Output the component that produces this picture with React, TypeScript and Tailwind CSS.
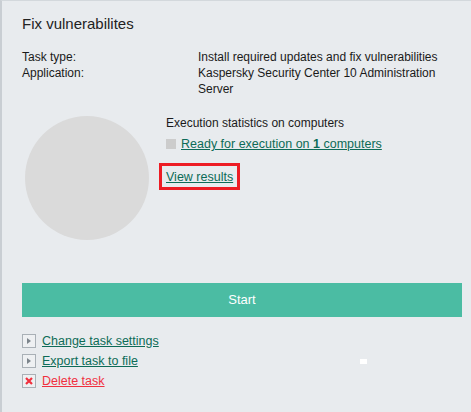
import { useState } from "react"

function ArrowBox() {
  return (
    <span className="w-[14px] h-[14px] border border-[#a9b0b6] bg-[#eef0f2] flex items-center justify-center shrink-0">
      <svg width="6" height="6" viewBox="0 0 6 6">
        <path d="M1 0 L5 3 L1 6 Z" fill="#7d858c" />
      </svg>
    </span>
  )
}

function CrossBox() {
  return (
    <span className="w-[14px] h-[14px] border border-[#a9b0b6] bg-[#eef0f2] flex items-center justify-center shrink-0">
      <svg width="8" height="8" viewBox="0 0 8 8">
        <path d="M1 1 L7 7 M7 1 L1 7" stroke="#f0303e" strokeWidth="2.2" />
      </svg>
    </span>
  )
}

export default function App() {
  const [ready] = useState(1)
  return (
    <div
      className="relative w-[471px] h-[412px] bg-[#e8ebee] border-l-2 border-t border-l-[#c9ced3] border-t-[#d3d8dc] text-[12px] text-[#1a1a1a] overflow-hidden"
      style={{ fontFamily: "Tahoma, 'Liberation Sans', Arial, sans-serif" }}
    >
      <div className="pl-[20px] pr-[9px] pt-[13px]">
        <h1 className="text-[15px] leading-[20px] text-[#222]">Fix vulnerabilites</h1>

        <div className="mt-[15px] grid grid-cols-[176px_1fr] leading-[16px]">
          <div>Task type:</div>
          <div>Install required updates and fix vulnerabilities</div>
          <div>Application:</div>
          <div className="pr-[20px]">Kaspersky Security Center 10 Administration Server</div>
        </div>

        <div className="mt-[18px] flex">
          <div className="w-[124px] h-[124px] rounded-full bg-[#dadada] mt-[1px] ml-[3px] shrink-0" />
          <div className="ml-[17px] flex flex-col">
            <div className="leading-[16px]">Execution statistics on computers</div>
            <div className="mt-[5px] flex items-center gap-[5px]">
              <span className="w-[10px] h-[10px] bg-[#cccccc]" />
              <a className="text-[#0d6b57] underline leading-[16px] text-[12.5px]">
                Ready for execution on <b>{ready}</b> computers
              </a>
            </div>
            <div className="mt-[11px] -ml-[7px] w-fit border-[3px] border-[#ed1c24] px-[4px] py-[2.5px]">
              <a className="text-[#0d6b57] underline leading-[16px] block text-[12.5px]">View results</a>
            </div>
          </div>
        </div>

        <button className="mt-[43px] w-[440px] h-[34px] bg-[#4bbca3] text-white text-[13px]">Start</button>

        <div className="mt-[16px] flex flex-col gap-[4px] text-[12.5px]">
          <div className="flex items-center gap-[6px] h-[16px]">
            <ArrowBox />
            <a className="text-[#0d6b57] underline">Change task settings</a>
          </div>
          <div className="flex items-center gap-[6px] h-[16px]">
            <ArrowBox />
            <a className="text-[#0d6b57] underline">Export task to file</a>
          </div>
          <div className="flex items-center gap-[6px] h-[16px]">
            <CrossBox />
            <a className="text-[#f0303e] underline">Delete task</a>
          </div>
        </div>
      </div>
      <div className="absolute left-[358px] top-[358px] w-[7px] h-[5px] bg-white" />
    </div>
  )
}
